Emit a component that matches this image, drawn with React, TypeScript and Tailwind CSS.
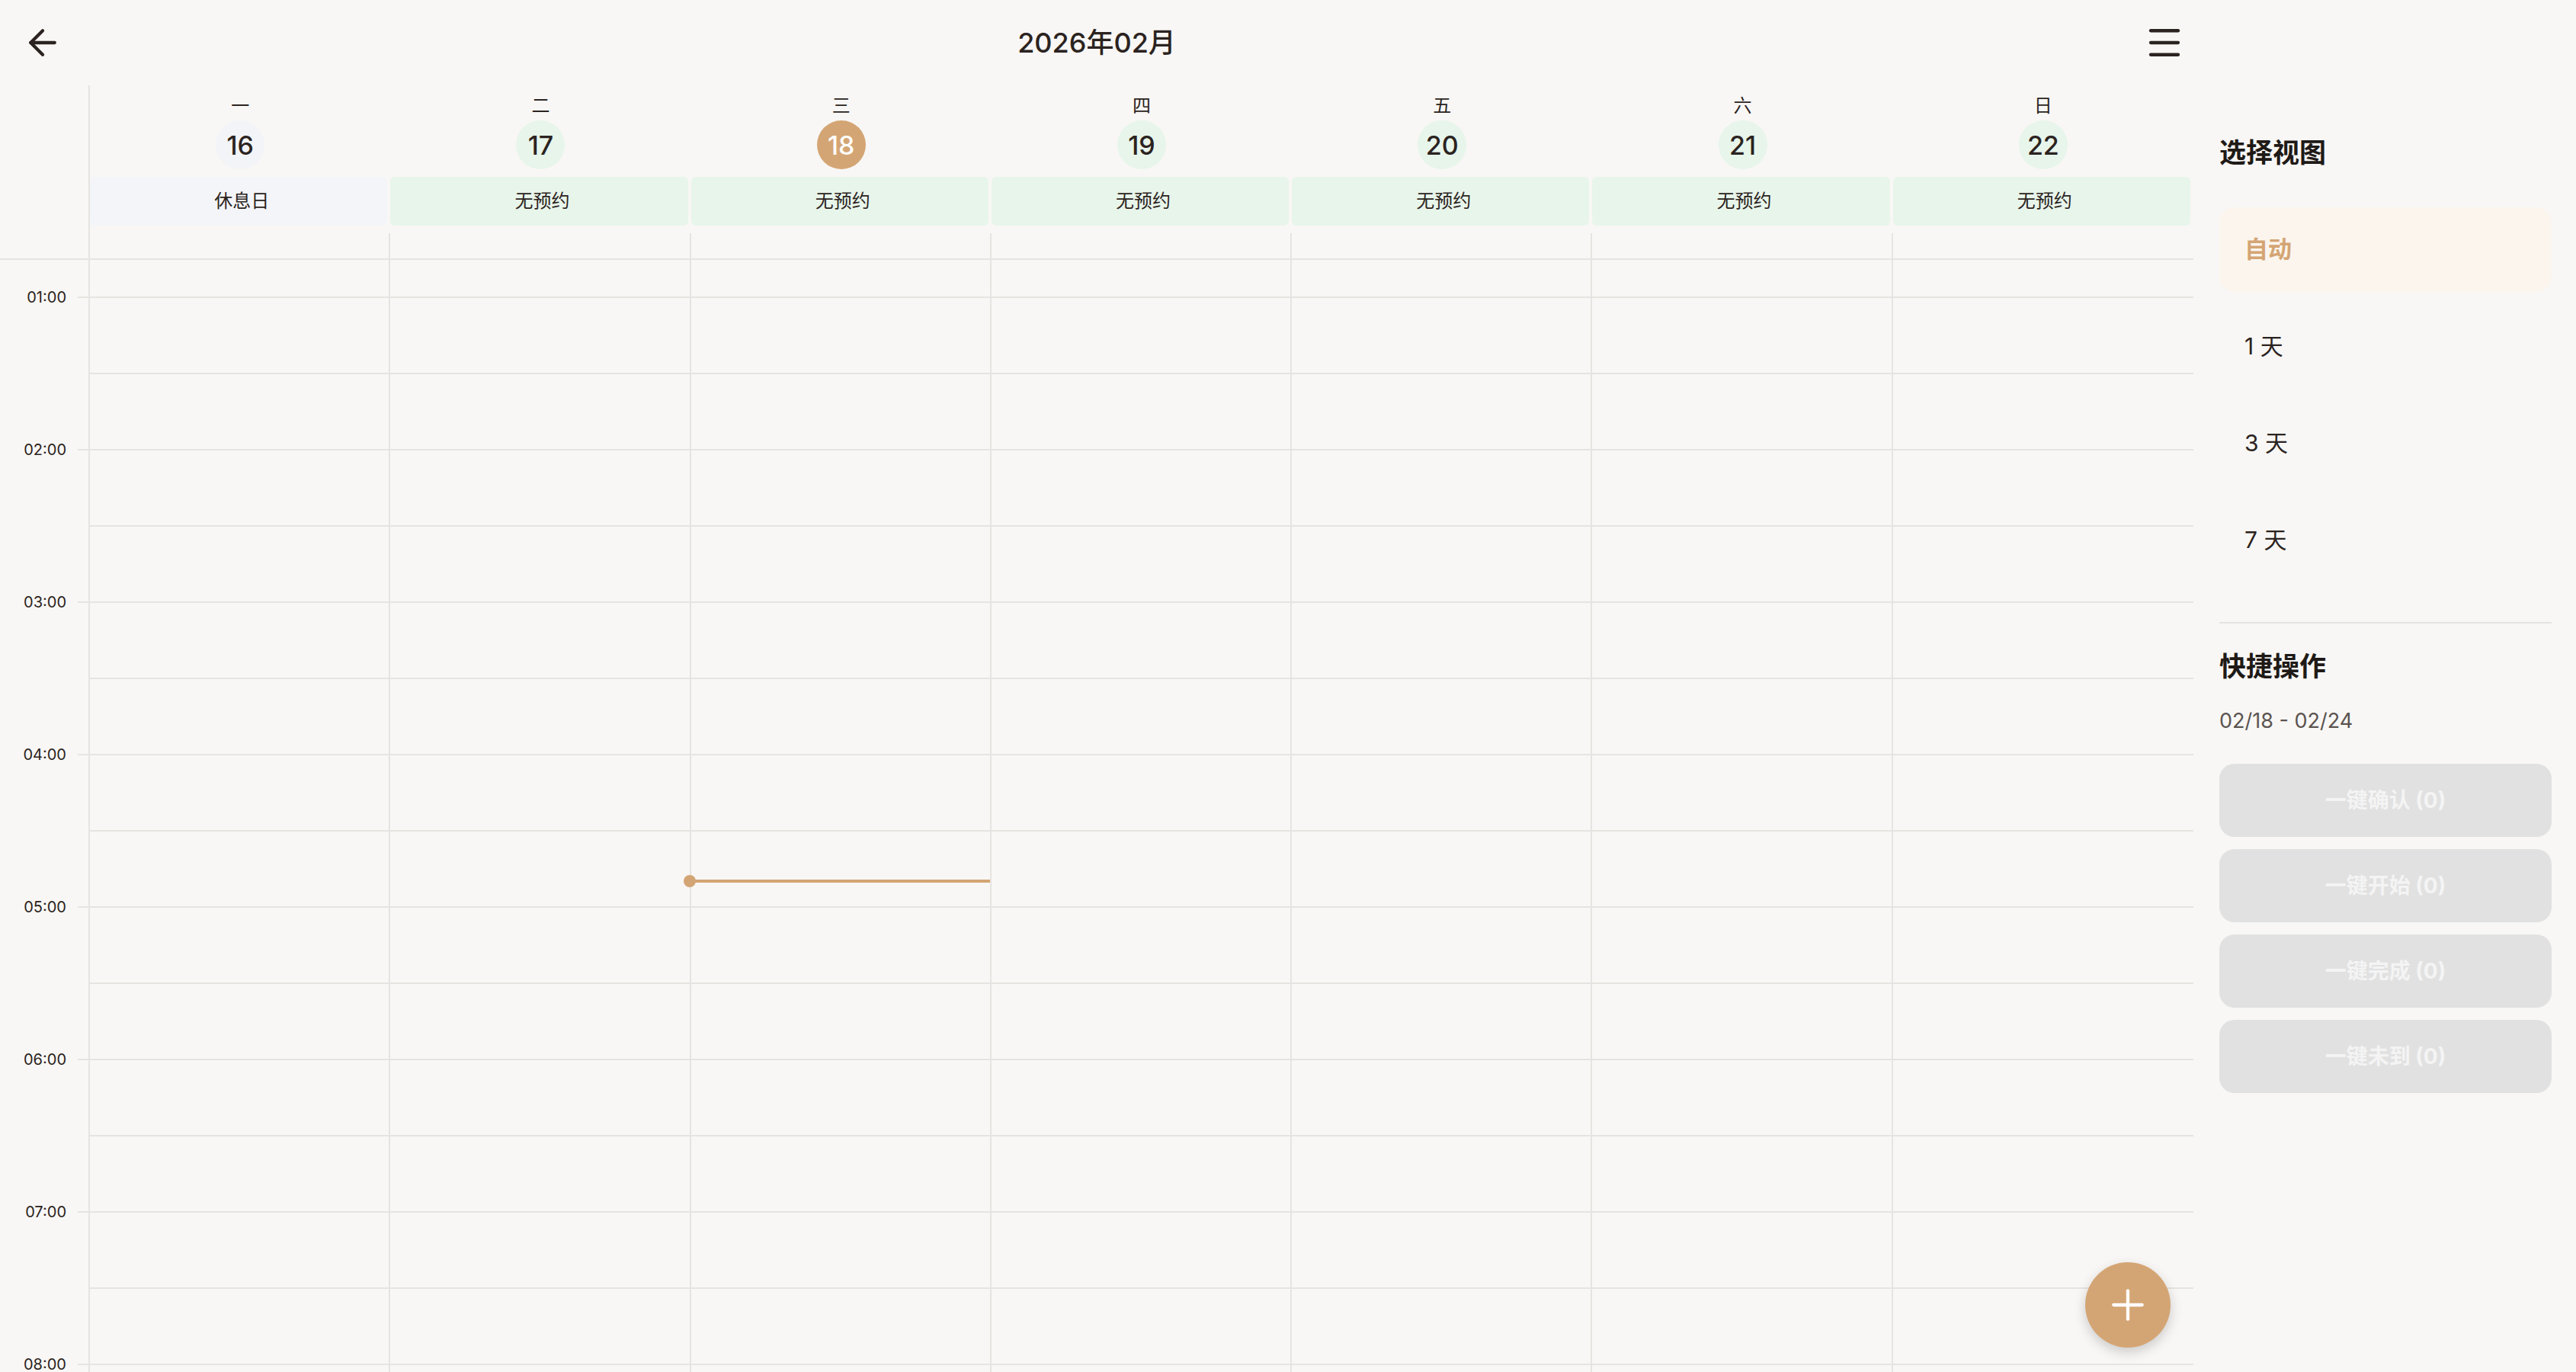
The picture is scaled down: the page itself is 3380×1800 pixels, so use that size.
import { ArrowLeft, Menu, Plus } from "lucide-react";

interface Day {
  week: string;
  date: number;
  status: string;
  rest?: boolean;
  today?: boolean;
}

const days: Day[] = [
  { week: "一", date: 16, status: "休息日", rest: true },
  { week: "二", date: 17, status: "无预约" },
  { week: "三", date: 18, status: "无预约", today: true },
  { week: "四", date: 19, status: "无预约" },
  { week: "五", date: 20, status: "无预约" },
  { week: "六", date: 21, status: "无预约" },
  { week: "日", date: 22, status: "无预约" },
];

const hours = ["01:00", "02:00", "03:00", "04:00", "05:00", "06:00", "07:00", "08:00"];
const slots = Array.from({ length: 16 }, (_, i) => i);
const views = ["自动", "1 天", "3 天", "7 天"];
const actions = ["一键确认 (0)", "一键开始 (0)", "一键完成 (0)", "一键未到 (0)"];

// Day header cell
function DayHeader({ day }: { day: Day }) {
  const circle = day.today
    ? "bg-[#d4a574] text-white"
    : day.rest
      ? "bg-[#f2f4f7] text-[#2b2320]"
      : "bg-[#e7f5eb] text-[#2b2320]";
  const bar = day.rest ? "bg-[#f3f5f8]" : "bg-[#e8f5eb]";

  return (
    <div className="flex flex-col items-center pt-[11px] pb-[10px]">
      <div className="h-[32px] text-[24px] leading-[32px] text-[#2b2320]">{day.week}</div>
      <div
        className={`mt-[3px] flex h-[64px] w-[64px] items-center justify-center rounded-full text-[34px] font-medium ${circle}`}
      >
        {day.date}
      </div>
      <div
        className={`mt-[10px] mr-[4px] flex h-[64px] items-center justify-center self-stretch rounded-[6px] pl-[8px] text-[24px] text-[#2b2320] ${bar}`}
      >
        {day.status}
      </div>
    </div>
  );
}

export default function App() {
  return (
    <div className="flex h-[1800px] w-[3380px] overflow-hidden bg-[#f8f7f5] font-['Inter','Noto_Sans_CJK_SC',sans-serif] text-[#2b2320]">
      {/* Calendar */}
      <div className="relative flex h-full w-[2878px] flex-col">
        {/* Header */}
        <div className="grid h-[112px] grid-cols-[1fr_auto_1fr] items-center">
          <div className="pl-[29px]">
            <ArrowLeft size={54} strokeWidth={1.9} className="text-[#2b2320]" />
          </div>
          <h1 className="text-[36px] font-medium">2026年02月</h1>
          <div className="flex justify-end pr-[11px]">
            <Menu size={54} strokeWidth={1.9} className="text-[#2b2320]" />
          </div>
        </div>

        {/* Day row */}
        <div className="flex">
          <div className="w-[118px] shrink-0 border-r-2 border-[#e6e4e1]" />
          <div className="grid flex-1 grid-cols-7">
            {days.map((d) => (
              <DayHeader key={d.date} day={d} />
            ))}
          </div>
        </div>

        {/* Top strip */}
        <div className="flex h-[35px] shrink-0 border-b-2 border-[#e6e4e1]">
          <div className="w-[118px] shrink-0 border-r-2 border-[#e6e4e1]" />
          <div className="grid flex-1 grid-cols-7 divide-x-2 divide-[#e6e4e1]">
            {days.map((d) => (
              <div key={d.date} />
            ))}
          </div>
        </div>

        {/* Time grid */}
        <div className="flex flex-1 overflow-hidden">
          <div className="flex w-[118px] shrink-0 flex-col border-r-2 border-[#e6e4e1]">
            <div className="h-[49px] shrink-0" />
            {hours.map((h) => (
              <div key={h} className="h-[200px] shrink-0">
                <div className="-mt-[15px] flex h-[30px] items-center justify-end">
                  <span className="mr-[15px] text-[20px] text-[#2b2320]">{h}</span>
                  <div className="h-[2px] w-[14px] bg-[#e6e4e1]" />
                </div>
              </div>
            ))}
          </div>
          <div className="grid flex-1 grid-cols-7 divide-x-2 divide-[#e6e4e1]">
            {days.map((d) => (
              <div key={d.date} className="relative flex flex-col">
                <div className="h-[48px] shrink-0" />
                {slots.map((s) => (
                  <div key={s} className="h-[100px] shrink-0 border-t-2 border-[#e6e4e1]" />
                ))}
                {d.today && (
                  <>
                    <div className="absolute top-[813px] right-0 left-0 h-[4px] bg-[#d4a574]" />
                    <div className="absolute top-[807px] -left-[10px] h-[16px] w-[16px] rounded-full bg-[#d4a574]" />
                  </>
                )}
              </div>
            ))}
          </div>
        </div>

        {/* FAB */}
        <button className="absolute right-[30px] bottom-[32px] flex h-[112px] w-[112px] items-center justify-center rounded-full bg-[#d4a574] shadow-[0_6px_16px_rgba(0,0,0,0.18)]">
          <Plus size={64} strokeWidth={1.6} className="text-white" />
        </button>
      </div>

      {/* Sidebar */}
      <aside className="ml-[34px] flex w-[436px] shrink-0 flex-col pt-[176px]">
        <h2 className="h-[48px] text-[35px] leading-[48px] font-bold text-[#1f1a17]">选择视图</h2>
        <div className="mt-[48px] flex flex-col gap-[16px]">
          {views.map((v, i) => (
            <div
              key={v}
              className={
                i === 0
                  ? "flex h-[111px] items-center rounded-[20px] bg-[#fbf5ee] px-[33px] text-[31px] font-bold text-[#d4a574]"
                  : "flex h-[111px] items-center rounded-[20px] px-[33px] text-[30px] text-[#2b2320]"
              }
            >
              {v}
            </div>
          ))}
        </div>
        <div className="mt-[52px] h-[2px] bg-[#e6e4e1]" />
        <h2 className="mt-[32px] h-[48px] text-[35px] leading-[48px] font-bold text-[#1f1a17]">快捷操作</h2>
        <div className="mt-[30px] h-[36px] text-[27px] leading-[36px] text-[#5b5451]">02/18 - 02/24</div>
        <div className="mt-[38px] flex flex-col gap-[16px]">
          {actions.map((a) => (
            <button
              key={a}
              disabled
              className="h-[96px] rounded-[20px] bg-[#e1e1e1] text-[28px] font-bold text-[#f4f4f4]"
            >
              {a}
            </button>
          ))}
        </div>
      </aside>
    </div>
  );
}
